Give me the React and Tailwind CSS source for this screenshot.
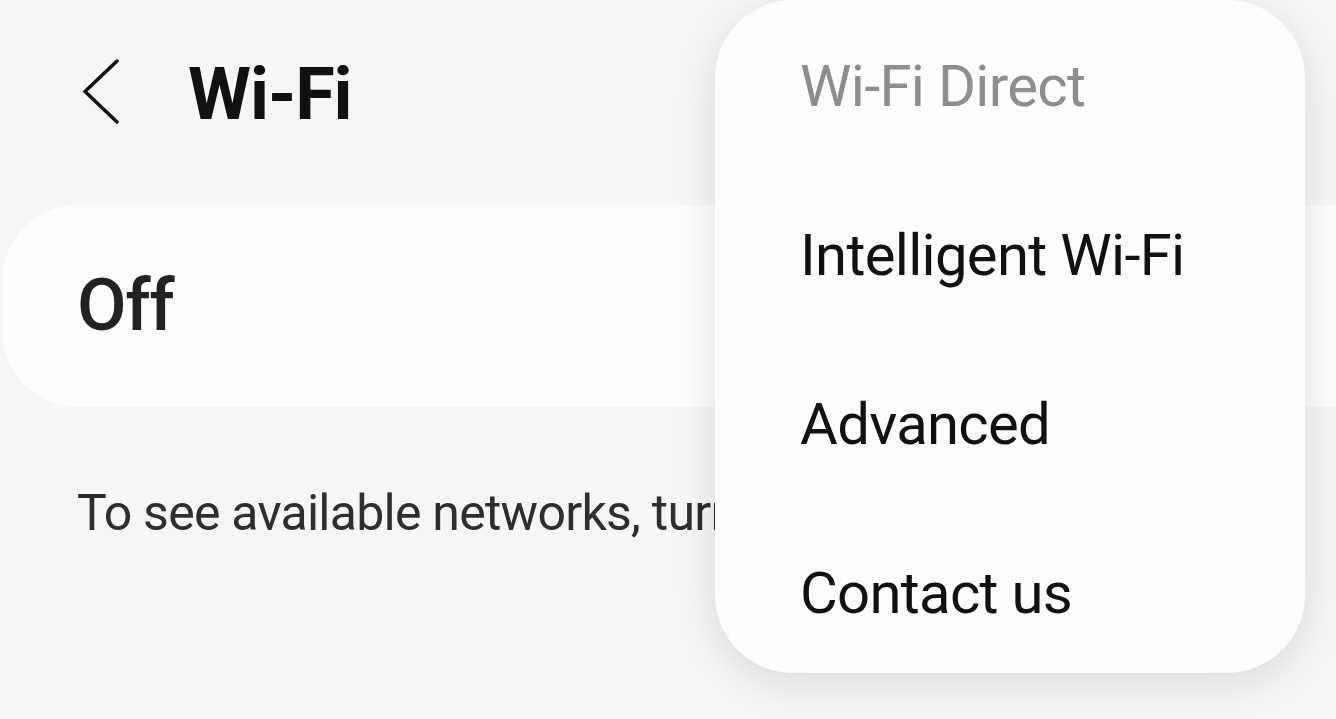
export default function App() {
  const menu = [
    { label: "Wi-Fi Direct", muted: true },
    { label: "Intelligent Wi-Fi" },
    { label: "Advanced" },
    { label: "Contact us" },
  ];

  return (
    <div
      className="relative h-[719px] w-[1336px] overflow-hidden bg-[#f6f6f6]"
      style={{ fontFamily: "Roboto, 'Noto Sans', sans-serif" }}
    >
      {/* header */}
      <div className="flex items-start pl-[82px] pt-[59px]">
        <svg width="38" height="66" viewBox="0 0 38 66" className="shrink-0">
          <path
            d="M35 2 L3 32.5 L35 63"
            fill="none"
            stroke="#111"
            strokeWidth="3.5"
            strokeLinecap="round"
            strokeLinejoin="round"
          />
        </svg>
        <h1 className="ml-[68px] text-[72px] font-bold leading-none tracking-[-0.015em] text-[#111]">
          Wi-Fi
        </h1>
      </div>

      {/* on/off card */}
      <div className="ml-[2px] mt-[74px] flex h-[202px] items-center rounded-l-[76px] bg-[#fdfdfd] pl-[75px]">
        <span className="text-[72px] font-medium leading-none tracking-[-0.02em] text-[#222]">
          Off
        </span>
      </div>

      <p className="mt-[81px] whitespace-nowrap pl-[77px] text-[50px] leading-none tracking-[-0.015em] text-[#2e2e2e]">
        To see available networks, turn on Wi-Fi.
      </p>

      {/* overflow menu */}
      <div className="absolute left-[715px] top-0 flex h-[673px] w-[590px] flex-col gap-[111px] rounded-[78px] bg-[#fdfdfd] pl-[85px] pt-[57px] shadow-[0_10px_40px_rgba(0,0,0,0.12)]">
        {menu.map((m) => (
          <div
            key={m.label}
            className={
              "whitespace-nowrap text-[58px] leading-none tracking-[-0.012em] " +
              (m.muted ? "text-[#8d8d8d]" : "text-[#111]")
            }
          >
            {m.label}
          </div>
        ))}
      </div>
    </div>
  );
}
